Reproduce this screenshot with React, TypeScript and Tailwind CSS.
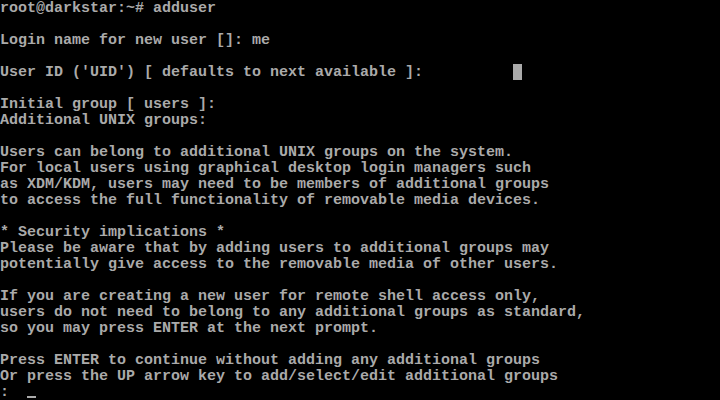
import React from 'react'

const lines: string[] = [
  "root@darkstar:~# adduser",
  "",
  "Login name for new user []: me",
  "",
  "User ID ('UID') [ defaults to next available ]:",
  "",
  "Initial group [ users ]:",
  "Additional UNIX groups:",
  "",
  "Users can belong to additional UNIX groups on the system.",
  "For local users using graphical desktop login managers such",
  "as XDM/KDM, users may need to be members of additional groups",
  "to access the full functionality of removable media devices.",
  "",
  "* Security implications *",
  "Please be aware that by adding users to additional groups may",
  "potentially give access to the removable media of other users.",
  "",
  "If you are creating a new user for remote shell access only,",
  "users do not need to belong to any additional groups as standard,",
  "so you may press ENTER at the next prompt.",
  "",
  "Press ENTER to continue without adding any additional groups",
  "Or press the UP arrow key to add/select/edit additional groups",
  ":",
]

const App = () => {
  return (
    <div className="w-[720px] h-[400px] bg-black overflow-hidden text-[#aaaaaa] font-['Liberation_Mono',monospace] font-bold text-[15px]">
      {lines.map((line, i) => (
        <div key={i} className="relative h-[16px] pt-[2px] leading-[14px] whitespace-pre">
          {line}
          {/* block cursor on the UID prompt */}
          {i === 4 && <span className="absolute left-[513px] top-0 w-[9px] h-[16px] bg-[#aaaaaa]" />}
          {/* underline cursor on the last prompt */}
          {i === 24 && <span className="absolute left-[27px] top-[12px] w-[9px] h-[2px] bg-[#aaaaaa]" />}
        </div>
      ))}
    </div>
  )
}

export default App
